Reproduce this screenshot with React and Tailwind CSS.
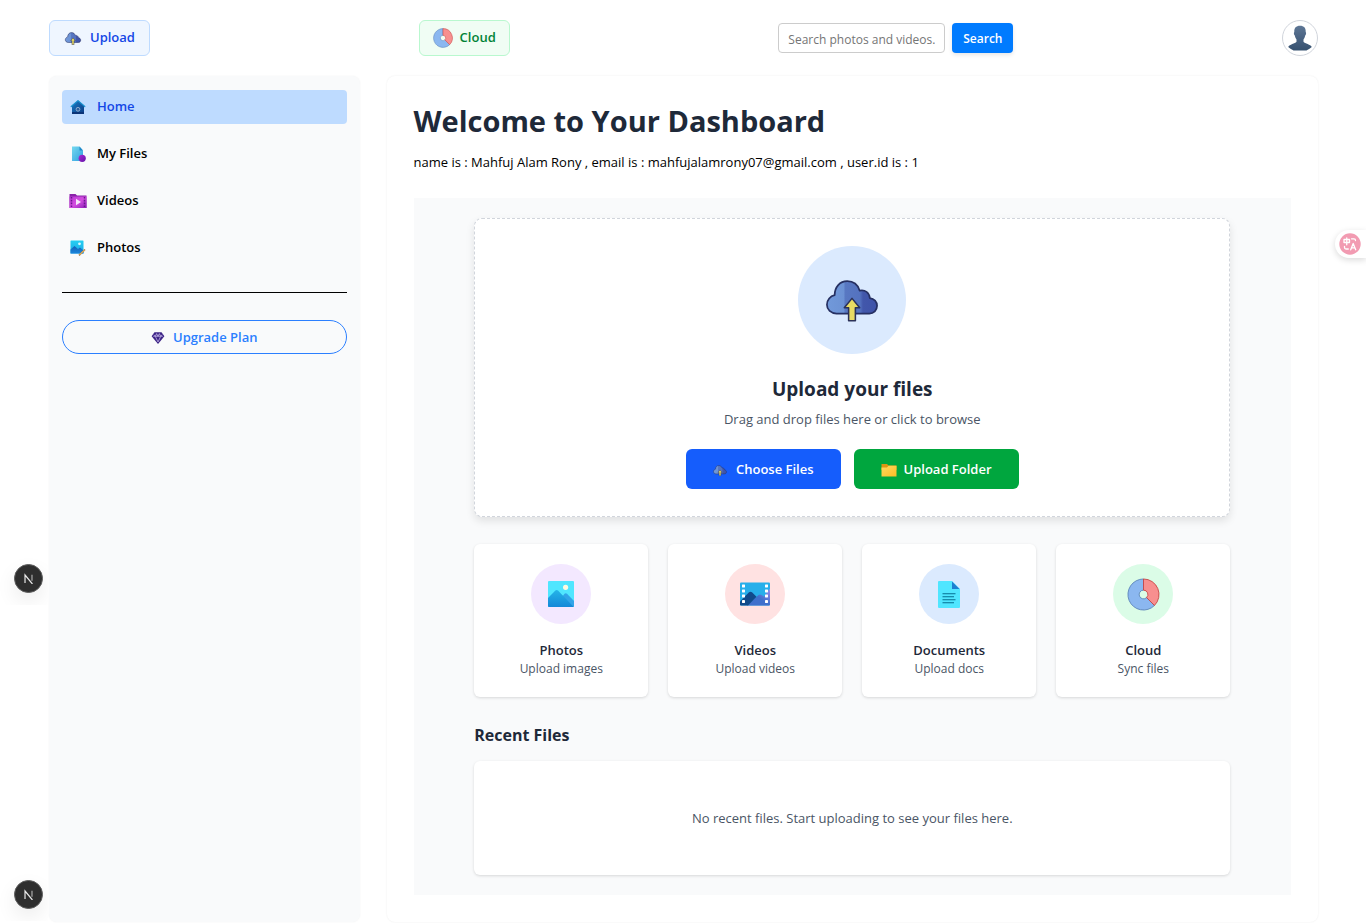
import React from "react";

function CloudUploadIcon({ className, id }) {
  return (
    <svg viewBox="0 0 56 44" className={className} aria-hidden="true">
      <defs>
        <linearGradient id={id} x1="0" y1="0" x2="1" y2="0">
          <stop offset="0" stopColor="#7199da" />
          <stop offset="0.34" stopColor="#6c92d4" />
          <stop offset="0.36" stopColor="#5878c2" />
          <stop offset="0.66" stopColor="#5472bf" />
          <stop offset="0.72" stopColor="#4257ab" />
          <stop offset="1" stopColor="#3e52a8" />
        </linearGradient>
      </defs>
      <path
        d="M12 35.5C6 35.5 2 31.5 2 26.5C2 21.500 5.500 17.500 10 16.500C10 8 15.500 2 23 2C29.500 2 34 5.500 36 11.800C41.500 10.500 46 14 46.500 19.500C51 20 54 23.500 54 27.500C54 32 50.500 35.500 46 35.500Z"
        fill={`url(#${id})`}
        stroke="#263062"
        strokeWidth="1.8"
        strokeLinejoin="round"
      />
      <path
        d="M28 19.800L36 29.500H31.500V43H24.500V29.500H20Z"
        fill="#e9dc63"
        stroke="#2b3158"
        strokeWidth="1.600"
        strokeLinejoin="round"
      />
    </svg>
  );
}

function DiscIcon({ className }) {
  return (
    <svg viewBox="0 0 34 34" className={className} aria-hidden="true">
      <path
        d="M17 1A16 16 0 1 0 28.300 28.300L20.200 20.200A4.500 4.500 0 1 1 17 12.500Z"
        fill="#8bb7f0"
        stroke="#5b83b8"
        strokeWidth="0.900"
      />
      <path
        d="M17 1A16 16 0 0 1 28.300 28.300L20.200 20.200A4.500 4.500 0 0 0 17 12.500Z"
        fill="#f78f8f"
        stroke="#c74343"
        strokeWidth="0.900"
      />
    </svg>
  );
}

function HomeIcon({ className }) {
  return (
    <svg viewBox="0 0 16 16" className={className} aria-hidden="true">
      <defs>
        <linearGradient id="homeWall" x1="0" y1="0" x2="1" y2="1">
          <stop offset="0" stopColor="#1b7cc4" />
          <stop offset="1" stopColor="#0b3b86" />
        </linearGradient>
      </defs>
      <path d="M2 6.500L8 1.500L14 6.500V15H2Z" fill="url(#homeWall)" />
      <path d="M1.200 7.500L8 1.600L14.800 7.500" fill="none" stroke="#1b93cf" strokeWidth="1.200" strokeLinecap="round" strokeLinejoin="round" />
      <path d="M2 13H14V15H2Z" fill="#0b3477" />
      <circle cx="8" cy="10.300" r="1.900" fill="#2c5f9e" stroke="#8fadcf" strokeWidth="1" />
    </svg>
  );
}

function FileDotIcon({ className }) {
  return (
    <svg viewBox="0 0 16 16" className={className} aria-hidden="true">
      <defs>
        <linearGradient id="fileBody" x1="0" y1="0" x2="1" y2="1">
          <stop offset="0" stopColor="#76d9ef" />
          <stop offset="1" stopColor="#2f9fe0" />
        </linearGradient>
        <linearGradient id="fileDot" x1="0" y1="0" x2="1" y2="1">
          <stop offset="0" stopColor="#a92bd6" />
          <stop offset="1" stopColor="#6414a8" />
        </linearGradient>
      </defs>
      <path d="M2 0.500H9.500L13 4.500V15H2Z" fill="url(#fileBody)" />
      <path d="M9.500 0.500L13 4.500H9.500Z" fill="#2189c9" />
      <circle cx="12.200" cy="12.300" r="3.600" fill="url(#fileDot)" />
    </svg>
  );
}

function VideoFolderIcon({ className }) {
  return (
    <svg viewBox="0 0 18 16" className={className} aria-hidden="true">
      <defs>
        <linearGradient id="videoFolder" x1="0" y1="0" x2="1" y2="1">
          <stop offset="0" stopColor="#b938d4" />
          <stop offset="0.500" stopColor="#d44ee0" />
          <stop offset="1" stopColor="#8a1db6" />
        </linearGradient>
      </defs>
      <path d="M0.500 1H6.500L8 2.500H17.500V15H0.500Z" fill="#8a22a8" />
      <path d="M0.500 3.500H17.500V15H0.500Z" fill="url(#videoFolder)" />
      <path d="M2.500 4V15M15.500 4V15" stroke="#6b1590" strokeWidth="1.500" strokeDasharray="1.600 1.200" />
      <path d="M7 5.800L12 9L7 12.200Z" fill="#f6e6fb" />
    </svg>
  );
}

function PhotoEditIcon({ className }) {
  return (
    <svg viewBox="0 0 16 16" className={className} aria-hidden="true">
      <defs>
        <linearGradient id="photoSky" x1="0" y1="0" x2="0" y2="1">
          <stop offset="0" stopColor="#25d0f2" />
          <stop offset="1" stopColor="#1ba7e6" />
        </linearGradient>
        <linearGradient id="photoHill" x1="0" y1="0" x2="0" y2="1">
          <stop offset="0" stopColor="#1160b7" />
          <stop offset="1" stopColor="#1c86dc" />
        </linearGradient>
      </defs>
      <rect x="0.500" y="0.500" width="13" height="13" rx="0.600" fill="url(#photoSky)" />
      <path d="M0.500 9.500L4.500 6L8 9L10 7.500L13.500 10.500V13.500H0.500Z" fill="url(#photoHill)" />
      <circle cx="9.500" cy="3.800" r="1.400" fill="#d8f8ff" />
      <path d="M9 15.400L15 9.500" stroke="#8a6a45" strokeWidth="1.500" />
      <path d="M9.500 14.900L14.600 9.900" stroke="#eeb55c" strokeWidth="1.100" />
    </svg>
  );
}

function GemIcon({ className }) {
  return (
    <svg viewBox="0 0 16 16" className={className} aria-hidden="true">
      <path d="M4 1.500H12L15.300 6L8 14.800L0.700 6Z" fill="#3c2385" />
      <path
        d="M2.500 6H13.500M5 6.300L8 12.500L11 6.300M5 6L6.400 3L8 6L9.600 3L11 6M3.400 4.300L5 6M12.600 4.300L11 6"
        fill="none"
        stroke="#d3c6f3"
        strokeWidth="0.800"
      />
    </svg>
  );
}

function FolderIcon({ className }) {
  return (
    <svg viewBox="0 0 16 14" className={className} aria-hidden="true">
      <defs>
        <linearGradient id="folderFront" x1="0" y1="0" x2="1" y2="1">
          <stop offset="0" stopColor="#ffd95f" />
          <stop offset="1" stopColor="#fbbd25" />
        </linearGradient>
      </defs>
      <path d="M0.500 1H6L7.500 2.500H15.500V7H0.500Z" fill="#dc9612" />
      <path d="M0.500 4.500H6L7.500 2.800H15.500V13.500H0.500Z" fill="url(#folderFront)" />
    </svg>
  );
}

function ImageIcon({ className }) {
  return (
    <svg viewBox="0 0 26 26" className={className} aria-hidden="true">
      <defs>
        <linearGradient id="mountains" x1="0" y1="0" x2="0" y2="1">
          <stop offset="0" stopColor="#25b4e8" />
          <stop offset="1" stopColor="#1488d8" />
        </linearGradient>
      </defs>
      <rect width="26" height="26" rx="1" fill="#50e6ff" />
      <path d="M11 20L16.500 12.800Q17.700 11.600 19 12.800L26 20V25Q26 26 25 26H9Z" fill="#32a4e8" />
      <path d="M0 17L7.400 9.600Q8.700 8.500 10 9.600L25.500 25.800L25 26H1Q0 26 0 25Z" fill="url(#mountains)" />
      <circle cx="17.600" cy="6.300" r="2.600" fill="#fff9e0" />
    </svg>
  );
}

function FilmIcon({ className }) {
  const holes = [2, 7, 12, 17.500];
  return (
    <svg viewBox="0 0 30 23" className={className} aria-hidden="true">
      <defs>
        <linearGradient id="filmHill" x1="0" y1="1" x2="1" y2="0">
          <stop offset="0.500" stopColor="#3f70cc" />
          <stop offset="1" stopColor="#a58df0" />
        </linearGradient>
      </defs>
      <rect width="30" height="23" rx="1" fill="#28afea" />
      <path d="M30 6V22Q30 23 29 23H7L18.500 12.500Q20 11.500 21.500 12.500L24 14Z" fill="url(#filmHill)" />
      <path d="M0 19L9 9.800Q10.500 8.800 12 9.800L16.500 14.300L8 23H1Q0 23 0 22Z" fill="#114a8b" />
      {holes.map((y) => (
        <React.Fragment key={y}>
          <rect x="2" y={y} width="3" height="3" rx="0.400" fill="#fff" />
          <rect x="25" y={y} width="3" height="3" rx="0.400" fill="#fff" />
        </React.Fragment>
      ))}
    </svg>
  );
}

function DocumentIcon({ className }) {
  return (
    <svg viewBox="0 0 22 27" className={className} aria-hidden="true">
      <path d="M1 0H14L22 8V26Q22 27 21 27H1Q0 27 0 26V1Q0 0 1 0Z" fill="#50e6ff" />
      <path d="M14 0.500L21.500 8H14Z" fill="#1e7fd0" />
      <path d="M4.500 12.800H17.500M4.500 15.800H16M4.500 18.800H17.500M4.500 21.800H16" stroke="#057093" strokeWidth="1.100" />
    </svg>
  );
}

function PersonIcon({ className }) {
  return (
    <svg viewBox="0 0 24 26" className={className} aria-hidden="true">
      <defs>
        <linearGradient id="person" x1="0" y1="0" x2="0" y2="1">
          <stop offset="0" stopColor="#5d7695" />
          <stop offset="1" stopColor="#36516f" />
        </linearGradient>
      </defs>
      <path
        d="M12 0.800C16 0.800 17.900 3 17.700 7C18.400 7.700 18.200 9.800 17.200 10.600C16.900 12.600 16 13.700 15.500 14.500V16.800C17 18.800 22.500 19.300 23.800 22C22.200 23.500 20 24.800 18.500 25.400H5.500C4 24.800 1.800 23.500 0.200 22C1.500 19.300 7 18.800 8.500 16.800V14.500C8 13.700 7.100 12.600 6.800 10.600C5.800 9.800 5.600 7.700 6.300 7C6.100 3 8 0.800 12 0.800Z"
        fill="url(#person)"
      />
    </svg>
  );
}

function TranslateIcon({ className }) {
  return (
    <svg viewBox="0 0 22 22" className={className} aria-hidden="true">
      <circle cx="11" cy="11" r="10.700" fill="#f29bb2" />
      <g fill="none" stroke="#fff" strokeWidth="1.300" strokeLinecap="round" strokeLinejoin="round">
        <path d="M5 6.500H10.500V9.500H5ZM7.750 4.800V11.800" />
        <path d="M12.500 5.800H15Q16.500 5.800 16.500 7.500" />
        <path d="M5.500 13.300V14.500Q5.500 16 7 16H9.300" />
        <path d="M11.700 16.800L14.200 10.500L16.700 16.800M12.600 14.800H15.800" />
      </g>
    </svg>
  );
}

function DevBadge({ className }) {
  return (
    <div className={`absolute left-0 flex h-[54px] w-12 items-center justify-center overflow-hidden pl-2 ${className}`}>
      <button
        type="button"
        aria-label="Open developer tools"
        className="flex size-[29px] shrink-0 items-center justify-center rounded-full border border-[#5c5c5c] bg-[#2e2e2e] shadow-[0_8px_20px_rgba(0,0,0,0.08)]"
      >
        <svg viewBox="0 0 12 12" className="size-[11px]" aria-hidden="true">
          <path d="M2.200 11V2.200L10.300 12" fill="none" stroke="#e8e8e8" strokeWidth="1.300" />
          <path d="M9.800 1.800V8.500" stroke="#b8b8b8" strokeWidth="1.200" />
        </svg>
      </button>
    </div>
  );
}

const navItems = [
  { label: "Home", Icon: HomeIcon, active: true },
  { label: "My Files", Icon: FileDotIcon },
  { label: "Videos", Icon: VideoFolderIcon },
  { label: "Photos", Icon: PhotoEditIcon },
];

const categories = [
  { title: "Photos", text: "Upload images", tint: "bg-purple-100", icon: <ImageIcon className="size-[26px]" /> },
  { title: "Videos", text: "Upload videos", tint: "bg-[#ffe2e2]", icon: <FilmIcon className="h-6 w-[30px]" /> },
  { title: "Documents", text: "Upload docs", tint: "bg-blue-100", icon: <DocumentIcon className="h-[27px] w-[22px]" /> },
  { title: "Cloud", text: "Sync files", tint: "bg-green-100", icon: <DiscIcon className="size-[33px]" /> },
];

function Header() {
  return (
    <header className="flex items-center justify-between py-5">
      <button
        type="button"
        className="flex h-9 items-center gap-2 rounded-md border border-blue-200 bg-blue-50 px-[14px] text-[13px] font-semibold text-blue-700"
      >
        <CloudUploadIcon id="cloudTop" className="h-[13px] w-[18px]" />
        Upload
      </button>
      <button
        type="button"
        className="flex h-9 items-center gap-[7px] rounded-md border border-green-200 bg-green-50 px-[13px] text-[13px] font-semibold text-green-700"
      >
        <DiscIcon className="size-5" />
        Cloud
      </button>
      <form className="flex items-center gap-[7px]" onSubmit={(e) => e.preventDefault()}>
        <input
          type="text"
          aria-label="Search photos and videos"
          placeholder="Search photos and videos..."
          className="h-[30px] w-[167px] rounded border border-[#ccc] bg-white px-[9px] pt-[2px] text-[12px] placeholder:text-[#757575]"
        />
        <button
          type="submit"
          className="h-[30px] w-[61px] rounded bg-[#007bff] pt-[2px] text-[12px] font-semibold text-white shadow-[0_2px_4px_rgba(0,0,0,0.1)]"
        >
          Search
        </button>
      </form>
      <button
        type="button"
        aria-label="Account"
        className="flex size-9 items-center justify-center rounded-full border border-gray-300 bg-white"
      >
        <PersonIcon className="h-[26px] w-6" />
      </button>
    </header>
  );
}

function Sidebar() {
  return (
    <aside className="rounded-lg bg-gray-50 px-[13px] pt-[14px] shadow-[0_0_2px_rgba(0,0,0,0.06)]">
      <nav className="flex flex-col gap-[13px]">
        {navItems.map(({ label, Icon, active }) => (
          <a
            key={label}
            href="#"
            className={`flex h-[34px] items-center gap-[10px] rounded px-[7px] text-[13px] font-semibold ${
              active ? "bg-[#bedbff] text-blue-700" : "text-black"
            }`}
          >
            <Icon className="h-4 w-[18px]" />
            {label}
          </a>
        ))}
      </nav>
      <hr className="mt-[27px] border-black" />
      <button
        type="button"
        className="mt-[27px] flex h-[34px] w-full items-center justify-center gap-2 rounded-full border border-[#2b7fff] pt-[2px] text-[13px] font-semibold text-[#2b7fff]"
      >
        <GemIcon className="h-[14px] w-[14px]" />
        Upgrade Plan
      </button>
    </aside>
  );
}

function UploadZone() {
  return (
    <section className="flex flex-col items-center rounded-lg border border-dashed border-gray-300 bg-white p-[27px] shadow-[0_4px_8px_rgba(0,0,0,0.1)]">
      <div className="flex size-[108px] items-center justify-center rounded-full bg-blue-100">
        <CloudUploadIcon id="cloudLarge" className="h-[43px] w-[54px]" />
      </div>
      <h2 className="mt-[21px] text-[19px] leading-7 font-bold text-gray-800">Upload your files</h2>
      <p className="mt-[6px] text-[13px] leading-5 text-gray-600">Drag and drop files here or click to browse</p>
      <div className="mt-5 flex gap-[13px]">
        <button
          type="button"
          className="flex h-10 items-center gap-[9px] rounded-md bg-[#155dfc] px-[27px] pt-[2px] text-[13px] font-semibold text-white"
        >
          <CloudUploadIcon id="cloudButton" className="h-[11px] w-[14px]" />
          Choose Files
        </button>
        <button
          type="button"
          className="flex h-10 items-center gap-[7px] rounded-md bg-[#00a63e] px-[27px] pt-[2px] text-[13px] font-semibold text-white"
        >
          <FolderIcon className="h-[14px] w-4" />
          Upload Folder
        </button>
      </div>
    </section>
  );
}

function Dashboard() {
  return (
    <main className="rounded-lg bg-white p-[27px] shadow-[0_0_2px_rgba(0,0,0,0.08)]">
      <h1 className="text-[29px] leading-9 font-bold text-gray-800">Welcome to Your Dashboard</h1>
      <p className="mt-[13px] text-[13px] leading-5 text-black">
        name is : Mahfuj Alam Rony , email is : mahfujalamrony07@gmail.com , user.id is : 1
      </p>
      <div className="mt-[26px] bg-gray-50 p-5">
        <div className="mx-auto max-w-[756px]">
          <UploadZone />
          <div className="mt-[27px] grid grid-cols-4 gap-5">
            {categories.map(({ title, text, tint, icon }) => (
              <section key={title} className="flex flex-col items-center rounded-md bg-white p-5 shadow-[0_1px_3px_rgba(0,0,0,0.14)]">
                <div className={`flex size-[60px] items-center justify-center rounded-full ${tint}`}>{icon}</div>
                <h3 className="mt-4 text-[13px] leading-5 font-semibold text-gray-800">{title}</h3>
                <p className="text-[12px] leading-[17px] text-gray-600">{text}</p>
              </section>
            ))}
          </div>
          <h2 className="mt-[26px] text-[16px] leading-6 font-bold text-gray-800">Recent Files</h2>
          <div className="mt-[14px] rounded-md bg-white px-5 py-[47px] text-center shadow-[0_1px_3px_rgba(0,0,0,0.14)]">
            <p className="text-[13px] leading-5 text-gray-600">No recent files. Start uploading to see your files here.</p>
          </div>
        </div>
      </div>
    </main>
  );
}

export default function App() {
  return (
    <div className="relative min-h-screen bg-white pr-12 pl-[49px] font-['Open_Sans','Noto_Sans',sans-serif]">
      <Header />
      <div className="grid grid-cols-[minmax(0,1fr)_minmax(0,3fr)] gap-[27px]">
        <Sidebar />
        <Dashboard />
      </div>
      <DevBadge className="top-[551px]" />
      <DevBadge className="bottom-[2px]" />
      <button
        type="button"
        aria-label="Translate page"
        className="absolute top-[230px] right-0 flex h-7 w-[31px] items-center rounded-l-full bg-white pl-1 shadow-[0_2px_6px_rgba(0,0,0,0.15)]"
      >
        <TranslateIcon className="size-[22px]" />
      </button>
    </div>
  );
}
